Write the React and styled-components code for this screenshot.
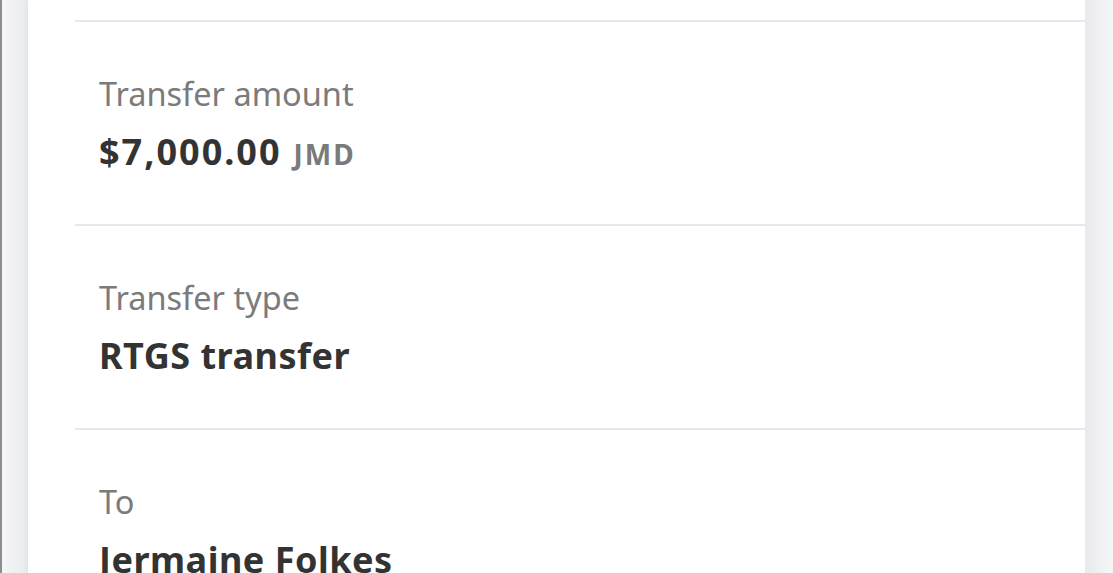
import React from 'react'
import styled, { createGlobalStyle } from 'styled-components'

const GlobalStyle = createGlobalStyle`
  html, body {
    margin: 0;
    padding: 0;
    height: 573px;
    overflow: hidden;
    background: #f3f4f6;
    font-family: "Noto Sans", "Open Sans", sans-serif;
  }
`

const Screen = styled.div`
  display: flex;
  height: 573px;
  overflow: hidden;
`

const EdgeLine = styled.div`
  width: 2px;
  background: #8e8e8e;
  flex-shrink: 0;
`

const Gutter = styled.div`
  width: ${p => p.w}px;
  flex-shrink: 0;
  background: linear-gradient(${p => p.dir}, #f6f6f8, #e9eaed);
`

const Card = styled.div`
  flex: 1;
  background: #fff;
  box-shadow: 0 0 6px rgba(0, 0, 0, 0.06);
  padding-left: 47px;
`

const Spacer = styled.div`
  height: 20px;
`

const Row = styled.div`
  border-top: 2px solid #e5e8ee;
  padding: 52px 0 50px 24px;
`

const Label = styled.div`
  font-size: 32.5px;
  line-height: 40px;
  color: #7b7b7b;
  white-space: nowrap;
`

const Value = styled.div`
  display: flex;
  align-items: baseline;
  margin-top: 16px;
  height: 44px;
  font-size: 36px;
  line-height: 44px;
  font-weight: 700;
  color: #333;
  white-space: nowrap;
  letter-spacing: ${p => (p.$numeric ? '2px' : '0.5px')};
`

const Currency = styled.span`
  font-size: 28px;
  line-height: 44px;
  font-weight: 700;
  letter-spacing: 2px;
  color: #7a7a7a;
  margin-left: 12px;
`

const details = [
  { label: 'Transfer amount', value: '$7,000.00', currency: 'JMD' },
  { label: 'Transfer type', value: 'RTGS transfer' },
  { label: 'To', value: 'Jermaine Folkes' },
]

export default function App() {
  return (
    <>
      <GlobalStyle />
      <Screen>
        <EdgeLine />
        <Gutter w={26} dir="to right" />
        <Card>
          <Spacer />
          {details.map(d => (
            <Row key={d.label}>
              <Label>{d.label}</Label>
              <Value $numeric={!!d.currency}>
                {d.value}
                {d.currency && <Currency>{d.currency}</Currency>}
              </Value>
            </Row>
          ))}
        </Card>
        <Gutter w={28} dir="to left" />
      </Screen>
    </>
  )
}
